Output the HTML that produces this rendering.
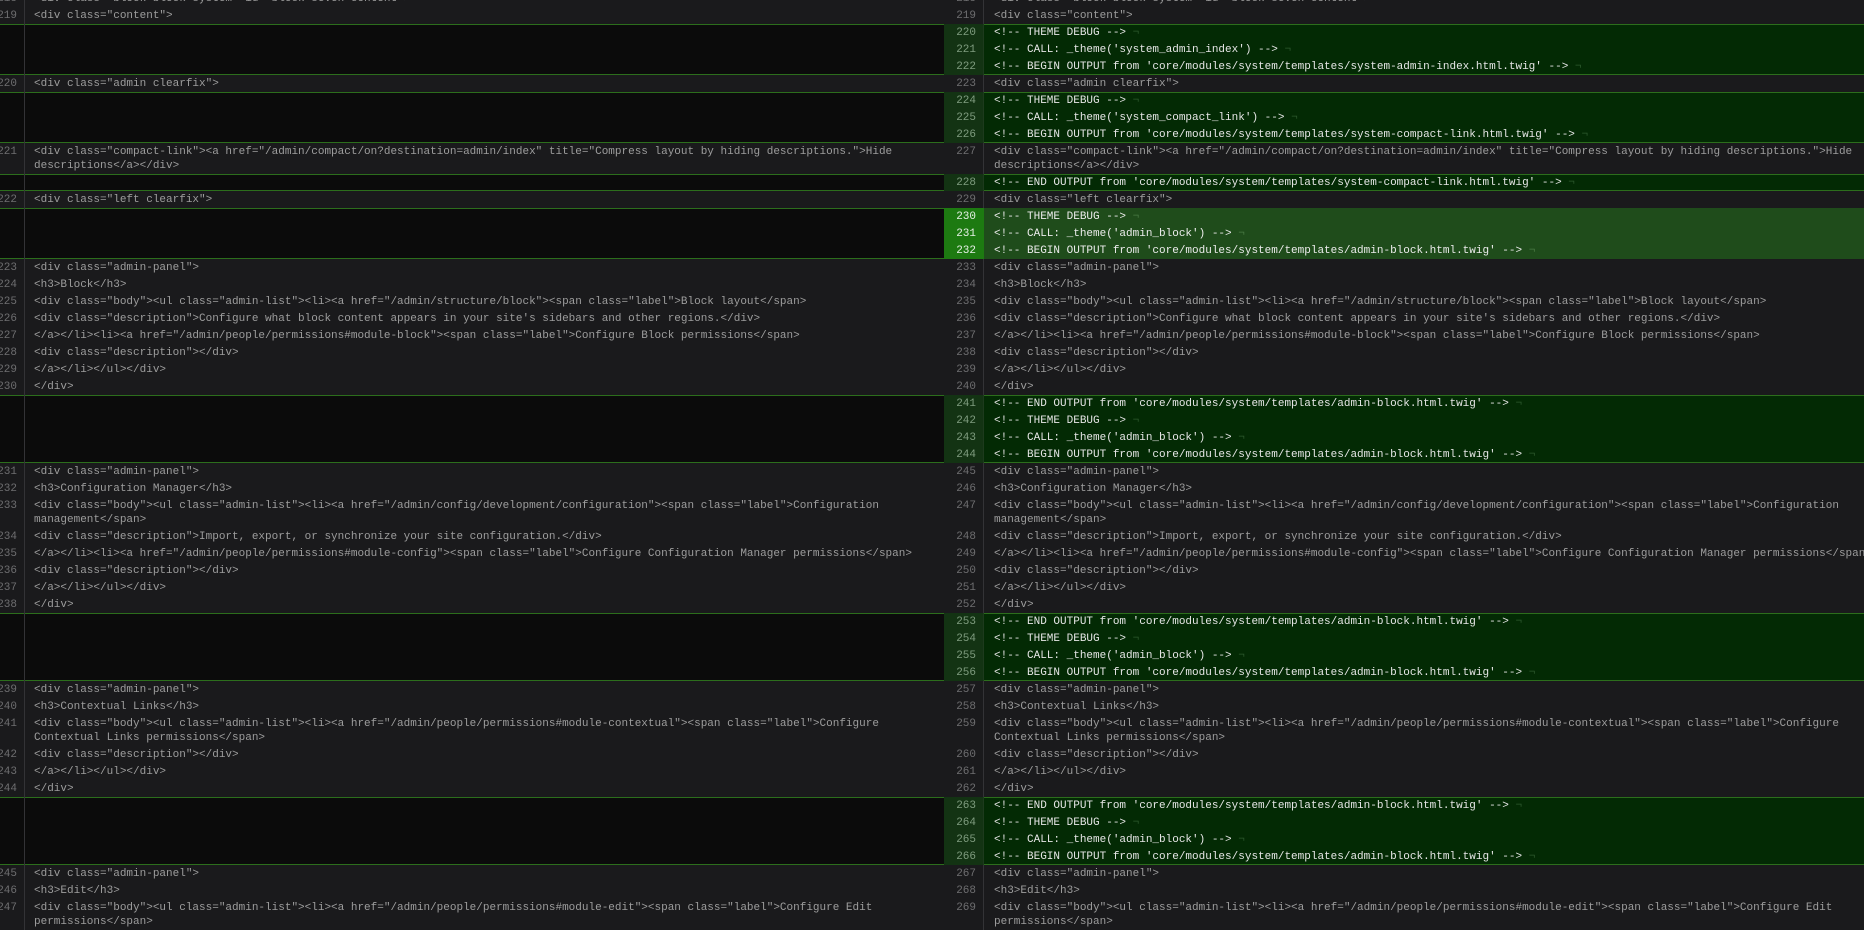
<!DOCTYPE html>
<html><head><meta charset="utf-8"><style>
html,body{margin:0;padding:0;background:#1a1a1c;width:1864px;height:919px;overflow:hidden}
#w{position:absolute;top:-10px;left:0;width:1864px;font-family:"Liberation Mono",monospace;font-size:11px}
.r{display:flex;width:1864px}
.c{position:relative;display:flex;overflow:hidden;box-sizing:border-box}
.L{width:944px}
.R{width:920px}
.n{flex:none;text-align:right;box-sizing:border-box;padding:1.5px 0;line-height:14px}
.L .n{width:25px;padding-right:7px;border-right:1px solid #333336;margin-left:-8px;width:33px}
.R .n{width:40px;padding-right:7px;border-right:1px solid #333336}
.t{white-space:pre;line-height:14px;padding:1.5px 0 1.5px 9px}
.R .t{padding-left:10px}
.x{background:#1a1a1c;color:#9d9d9d}
.x .n{color:#6e6e70}
.p{background:#0b0b0b}
.p .n{color:transparent}
.a{background:#032a04;color:#e6e6e6}
.a .n{background:#133313;color:#7f9c7f;border-right-color:#1d3a1d}
.s{background:#1f4c1b;color:#ececec}
.s .n{background:#1d7a11;color:#e6f0e6;border-right-color:#1d7a11}
.bt{box-shadow:inset 0 1px 0 #2c6e1c}
.bb{box-shadow:inset 0 -1px 0 #2c6e1c}
.bt.bb{box-shadow:inset 0 1px 0 #2c6e1c,inset 0 -1px 0 #2c6e1c}
.m{color:#2e5a2e}
.s .m{color:#4a7a44}
</style></head><body><div id="w">

<div class="r"><div class="c L x"><span class="n">218</span><span class="t">&lt;div class="block block-system" id="block-seven-content"&gt;</span></div><div class="c R x"><span class="n">218</span><span class="t">&lt;div class="block block-system" id="block-seven-content"&gt;</span></div></div>
<div class="r"><div class="c L x"><span class="n">219</span><span class="t">&lt;div class="content"&gt;</span></div><div class="c R x"><span class="n">219</span><span class="t">&lt;div class="content"&gt;</span></div></div>

<div class="r"><div class="c L p bt"><span class="n"> </span><span class="t"> </span></div><div class="c R a bt"><span class="n">220</span><span class="t">&lt;!-- THEME DEBUG --&gt; <span class="m">¬</span></span></div></div>
<div class="r"><div class="c L p"><span class="n"> </span><span class="t"> </span></div><div class="c R a"><span class="n">221</span><span class="t">&lt;!-- CALL: _theme('system_admin_index') --&gt; <span class="m">¬</span></span></div></div>
<div class="r"><div class="c L p bb"><span class="n"> </span><span class="t"> </span></div><div class="c R a bb"><span class="n">222</span><span class="t">&lt;!-- BEGIN OUTPUT from 'core/modules/system/templates/system-admin-index.html.twig' --&gt; <span class="m">¬</span></span></div></div>

<div class="r"><div class="c L x"><span class="n">220</span><span class="t">&lt;div class="admin clearfix"&gt;</span></div><div class="c R x"><span class="n">223</span><span class="t">&lt;div class="admin clearfix"&gt;</span></div></div>

<div class="r"><div class="c L p bt"><span class="n"> </span><span class="t"> </span></div><div class="c R a bt"><span class="n">224</span><span class="t">&lt;!-- THEME DEBUG --&gt; <span class="m">¬</span></span></div></div>
<div class="r"><div class="c L p"><span class="n"> </span><span class="t"> </span></div><div class="c R a"><span class="n">225</span><span class="t">&lt;!-- CALL: _theme('system_compact_link') --&gt; <span class="m">¬</span></span></div></div>
<div class="r"><div class="c L p bb"><span class="n"> </span><span class="t"> </span></div><div class="c R a bb"><span class="n">226</span><span class="t">&lt;!-- BEGIN OUTPUT from 'core/modules/system/templates/system-compact-link.html.twig' --&gt; <span class="m">¬</span></span></div></div>

<div class="r"><div class="c L x"><span class="n">221</span><span class="t">&lt;div class="compact-link"&gt;&lt;a href="/admin/compact/on?destination=admin/index" title="Compress layout by hiding descriptions."&gt;Hide
descriptions&lt;/a&gt;&lt;/div&gt;</span></div><div class="c R x"><span class="n">227</span><span class="t">&lt;div class="compact-link"&gt;&lt;a href="/admin/compact/on?destination=admin/index" title="Compress layout by hiding descriptions."&gt;Hide
descriptions&lt;/a&gt;&lt;/div&gt;</span></div></div>

<div class="r"><div class="c L p bt bb"><span class="n"> </span><span class="t"> </span></div><div class="c R a bt bb"><span class="n">228</span><span class="t">&lt;!-- END OUTPUT from 'core/modules/system/templates/system-compact-link.html.twig' --&gt; <span class="m">¬</span></span></div></div>

<div class="r"><div class="c L x"><span class="n">222</span><span class="t">&lt;div class="left clearfix"&gt;</span></div><div class="c R x"><span class="n">229</span><span class="t">&lt;div class="left clearfix"&gt;</span></div></div>

<div class="r"><div class="c L p bt"><span class="n"> </span><span class="t"> </span></div><div class="c R s"><span class="n">230</span><span class="t">&lt;!-- THEME DEBUG --&gt; <span class="m">¬</span></span></div></div>
<div class="r"><div class="c L p"><span class="n"> </span><span class="t"> </span></div><div class="c R s"><span class="n">231</span><span class="t">&lt;!-- CALL: _theme('admin_block') --&gt; <span class="m">¬</span></span></div></div>
<div class="r"><div class="c L p bb"><span class="n"> </span><span class="t"> </span></div><div class="c R s"><span class="n">232</span><span class="t">&lt;!-- BEGIN OUTPUT from 'core/modules/system/templates/admin-block.html.twig' --&gt; <span class="m">¬</span></span></div></div>

<div class="r"><div class="c L x"><span class="n">223</span><span class="t">&lt;div class="admin-panel"&gt;</span></div><div class="c R x"><span class="n">233</span><span class="t">&lt;div class="admin-panel"&gt;</span></div></div>
<div class="r"><div class="c L x"><span class="n">224</span><span class="t">&lt;h3&gt;Block&lt;/h3&gt;</span></div><div class="c R x"><span class="n">234</span><span class="t">&lt;h3&gt;Block&lt;/h3&gt;</span></div></div>
<div class="r"><div class="c L x"><span class="n">225</span><span class="t">&lt;div class="body"&gt;&lt;ul class="admin-list"&gt;&lt;li&gt;&lt;a href="/admin/structure/block"&gt;&lt;span class="label"&gt;Block layout&lt;/span&gt;</span></div><div class="c R x"><span class="n">235</span><span class="t">&lt;div class="body"&gt;&lt;ul class="admin-list"&gt;&lt;li&gt;&lt;a href="/admin/structure/block"&gt;&lt;span class="label"&gt;Block layout&lt;/span&gt;</span></div></div>
<div class="r"><div class="c L x"><span class="n">226</span><span class="t">&lt;div class="description"&gt;Configure what block content appears in your site's sidebars and other regions.&lt;/div&gt;</span></div><div class="c R x"><span class="n">236</span><span class="t">&lt;div class="description"&gt;Configure what block content appears in your site's sidebars and other regions.&lt;/div&gt;</span></div></div>
<div class="r"><div class="c L x"><span class="n">227</span><span class="t">&lt;/a&gt;&lt;/li&gt;&lt;li&gt;&lt;a href="/admin/people/permissions#module-block"&gt;&lt;span class="label"&gt;Configure Block permissions&lt;/span&gt;</span></div><div class="c R x"><span class="n">237</span><span class="t">&lt;/a&gt;&lt;/li&gt;&lt;li&gt;&lt;a href="/admin/people/permissions#module-block"&gt;&lt;span class="label"&gt;Configure Block permissions&lt;/span&gt;</span></div></div>
<div class="r"><div class="c L x"><span class="n">228</span><span class="t">&lt;div class="description"&gt;&lt;/div&gt;</span></div><div class="c R x"><span class="n">238</span><span class="t">&lt;div class="description"&gt;&lt;/div&gt;</span></div></div>
<div class="r"><div class="c L x"><span class="n">229</span><span class="t">&lt;/a&gt;&lt;/li&gt;&lt;/ul&gt;&lt;/div&gt;</span></div><div class="c R x"><span class="n">239</span><span class="t">&lt;/a&gt;&lt;/li&gt;&lt;/ul&gt;&lt;/div&gt;</span></div></div>
<div class="r"><div class="c L x"><span class="n">230</span><span class="t">&lt;/div&gt;</span></div><div class="c R x"><span class="n">240</span><span class="t">&lt;/div&gt;</span></div></div>

<div class="r"><div class="c L p bt"><span class="n"> </span><span class="t"> </span></div><div class="c R a bt"><span class="n">241</span><span class="t">&lt;!-- END OUTPUT from 'core/modules/system/templates/admin-block.html.twig' --&gt; <span class="m">¬</span></span></div></div>
<div class="r"><div class="c L p"><span class="n"> </span><span class="t"> </span></div><div class="c R a"><span class="n">242</span><span class="t">&lt;!-- THEME DEBUG --&gt; <span class="m">¬</span></span></div></div>
<div class="r"><div class="c L p"><span class="n"> </span><span class="t"> </span></div><div class="c R a"><span class="n">243</span><span class="t">&lt;!-- CALL: _theme('admin_block') --&gt; <span class="m">¬</span></span></div></div>
<div class="r"><div class="c L p bb"><span class="n"> </span><span class="t"> </span></div><div class="c R a bb"><span class="n">244</span><span class="t">&lt;!-- BEGIN OUTPUT from 'core/modules/system/templates/admin-block.html.twig' --&gt; <span class="m">¬</span></span></div></div>

<div class="r"><div class="c L x"><span class="n">231</span><span class="t">&lt;div class="admin-panel"&gt;</span></div><div class="c R x"><span class="n">245</span><span class="t">&lt;div class="admin-panel"&gt;</span></div></div>
<div class="r"><div class="c L x"><span class="n">232</span><span class="t">&lt;h3&gt;Configuration Manager&lt;/h3&gt;</span></div><div class="c R x"><span class="n">246</span><span class="t">&lt;h3&gt;Configuration Manager&lt;/h3&gt;</span></div></div>
<div class="r"><div class="c L x"><span class="n">233</span><span class="t">&lt;div class="body"&gt;&lt;ul class="admin-list"&gt;&lt;li&gt;&lt;a href="/admin/config/development/configuration"&gt;&lt;span class="label"&gt;Configuration
management&lt;/span&gt;</span></div><div class="c R x"><span class="n">247</span><span class="t">&lt;div class="body"&gt;&lt;ul class="admin-list"&gt;&lt;li&gt;&lt;a href="/admin/config/development/configuration"&gt;&lt;span class="label"&gt;Configuration
management&lt;/span&gt;</span></div></div>
<div class="r"><div class="c L x"><span class="n">234</span><span class="t">&lt;div class="description"&gt;Import, export, or synchronize your site configuration.&lt;/div&gt;</span></div><div class="c R x"><span class="n">248</span><span class="t">&lt;div class="description"&gt;Import, export, or synchronize your site configuration.&lt;/div&gt;</span></div></div>
<div class="r"><div class="c L x"><span class="n">235</span><span class="t">&lt;/a&gt;&lt;/li&gt;&lt;li&gt;&lt;a href="/admin/people/permissions#module-config"&gt;&lt;span class="label"&gt;Configure Configuration Manager permissions&lt;/span&gt;</span></div><div class="c R x"><span class="n">249</span><span class="t">&lt;/a&gt;&lt;/li&gt;&lt;li&gt;&lt;a href="/admin/people/permissions#module-config"&gt;&lt;span class="label"&gt;Configure Configuration Manager permissions&lt;/span&gt;</span></div></div>
<div class="r"><div class="c L x"><span class="n">236</span><span class="t">&lt;div class="description"&gt;&lt;/div&gt;</span></div><div class="c R x"><span class="n">250</span><span class="t">&lt;div class="description"&gt;&lt;/div&gt;</span></div></div>
<div class="r"><div class="c L x"><span class="n">237</span><span class="t">&lt;/a&gt;&lt;/li&gt;&lt;/ul&gt;&lt;/div&gt;</span></div><div class="c R x"><span class="n">251</span><span class="t">&lt;/a&gt;&lt;/li&gt;&lt;/ul&gt;&lt;/div&gt;</span></div></div>
<div class="r"><div class="c L x"><span class="n">238</span><span class="t">&lt;/div&gt;</span></div><div class="c R x"><span class="n">252</span><span class="t">&lt;/div&gt;</span></div></div>

<div class="r"><div class="c L p bt"><span class="n"> </span><span class="t"> </span></div><div class="c R a bt"><span class="n">253</span><span class="t">&lt;!-- END OUTPUT from 'core/modules/system/templates/admin-block.html.twig' --&gt; <span class="m">¬</span></span></div></div>
<div class="r"><div class="c L p"><span class="n"> </span><span class="t"> </span></div><div class="c R a"><span class="n">254</span><span class="t">&lt;!-- THEME DEBUG --&gt; <span class="m">¬</span></span></div></div>
<div class="r"><div class="c L p"><span class="n"> </span><span class="t"> </span></div><div class="c R a"><span class="n">255</span><span class="t">&lt;!-- CALL: _theme('admin_block') --&gt; <span class="m">¬</span></span></div></div>
<div class="r"><div class="c L p bb"><span class="n"> </span><span class="t"> </span></div><div class="c R a bb"><span class="n">256</span><span class="t">&lt;!-- BEGIN OUTPUT from 'core/modules/system/templates/admin-block.html.twig' --&gt; <span class="m">¬</span></span></div></div>

<div class="r"><div class="c L x"><span class="n">239</span><span class="t">&lt;div class="admin-panel"&gt;</span></div><div class="c R x"><span class="n">257</span><span class="t">&lt;div class="admin-panel"&gt;</span></div></div>
<div class="r"><div class="c L x"><span class="n">240</span><span class="t">&lt;h3&gt;Contextual Links&lt;/h3&gt;</span></div><div class="c R x"><span class="n">258</span><span class="t">&lt;h3&gt;Contextual Links&lt;/h3&gt;</span></div></div>
<div class="r"><div class="c L x"><span class="n">241</span><span class="t">&lt;div class="body"&gt;&lt;ul class="admin-list"&gt;&lt;li&gt;&lt;a href="/admin/people/permissions#module-contextual"&gt;&lt;span class="label"&gt;Configure
Contextual Links permissions&lt;/span&gt;</span></div><div class="c R x"><span class="n">259</span><span class="t">&lt;div class="body"&gt;&lt;ul class="admin-list"&gt;&lt;li&gt;&lt;a href="/admin/people/permissions#module-contextual"&gt;&lt;span class="label"&gt;Configure
Contextual Links permissions&lt;/span&gt;</span></div></div>
<div class="r"><div class="c L x"><span class="n">242</span><span class="t">&lt;div class="description"&gt;&lt;/div&gt;</span></div><div class="c R x"><span class="n">260</span><span class="t">&lt;div class="description"&gt;&lt;/div&gt;</span></div></div>
<div class="r"><div class="c L x"><span class="n">243</span><span class="t">&lt;/a&gt;&lt;/li&gt;&lt;/ul&gt;&lt;/div&gt;</span></div><div class="c R x"><span class="n">261</span><span class="t">&lt;/a&gt;&lt;/li&gt;&lt;/ul&gt;&lt;/div&gt;</span></div></div>
<div class="r"><div class="c L x"><span class="n">244</span><span class="t">&lt;/div&gt;</span></div><div class="c R x"><span class="n">262</span><span class="t">&lt;/div&gt;</span></div></div>

<div class="r"><div class="c L p bt"><span class="n"> </span><span class="t"> </span></div><div class="c R a bt"><span class="n">263</span><span class="t">&lt;!-- END OUTPUT from 'core/modules/system/templates/admin-block.html.twig' --&gt; <span class="m">¬</span></span></div></div>
<div class="r"><div class="c L p"><span class="n"> </span><span class="t"> </span></div><div class="c R a"><span class="n">264</span><span class="t">&lt;!-- THEME DEBUG --&gt; <span class="m">¬</span></span></div></div>
<div class="r"><div class="c L p"><span class="n"> </span><span class="t"> </span></div><div class="c R a"><span class="n">265</span><span class="t">&lt;!-- CALL: _theme('admin_block') --&gt; <span class="m">¬</span></span></div></div>
<div class="r"><div class="c L p bb"><span class="n"> </span><span class="t"> </span></div><div class="c R a bb"><span class="n">266</span><span class="t">&lt;!-- BEGIN OUTPUT from 'core/modules/system/templates/admin-block.html.twig' --&gt; <span class="m">¬</span></span></div></div>

<div class="r"><div class="c L x"><span class="n">245</span><span class="t">&lt;div class="admin-panel"&gt;</span></div><div class="c R x"><span class="n">267</span><span class="t">&lt;div class="admin-panel"&gt;</span></div></div>
<div class="r"><div class="c L x"><span class="n">246</span><span class="t">&lt;h3&gt;Edit&lt;/h3&gt;</span></div><div class="c R x"><span class="n">268</span><span class="t">&lt;h3&gt;Edit&lt;/h3&gt;</span></div></div>
<div class="r"><div class="c L x"><span class="n">247</span><span class="t">&lt;div class="body"&gt;&lt;ul class="admin-list"&gt;&lt;li&gt;&lt;a href="/admin/people/permissions#module-edit"&gt;&lt;span class="label"&gt;Configure Edit
permissions&lt;/span&gt;</span></div><div class="c R x"><span class="n">269</span><span class="t">&lt;div class="body"&gt;&lt;ul class="admin-list"&gt;&lt;li&gt;&lt;a href="/admin/people/permissions#module-edit"&gt;&lt;span class="label"&gt;Configure Edit
permissions&lt;/span&gt;</span></div></div>

</div></body></html>
